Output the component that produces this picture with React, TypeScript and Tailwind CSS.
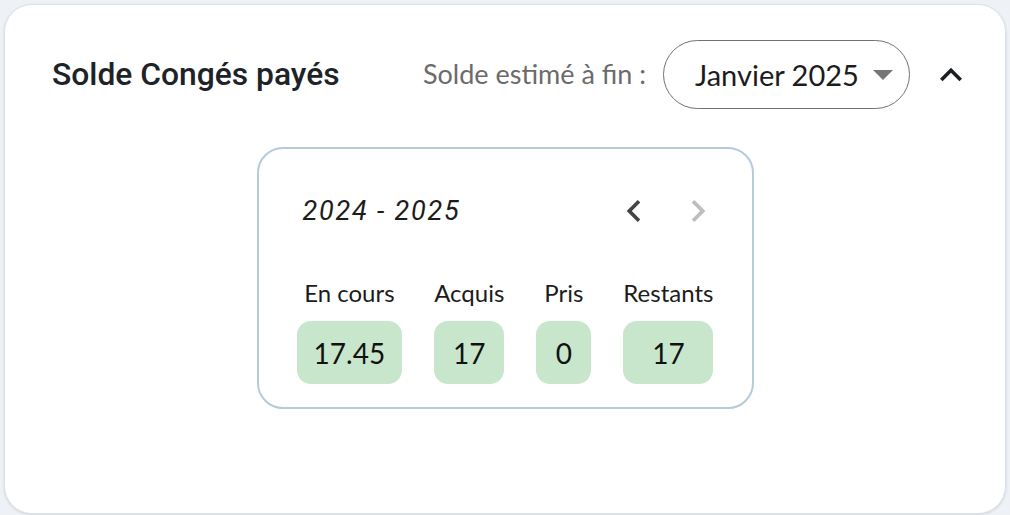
import React from "react";

const BODY = { fontFamily: "Lato, 'Open Sans', sans-serif" };
const TITLE = { fontFamily: "Roboto, 'Noto Sans', sans-serif" };

const stats = [
  { label: "En cours", value: "17.45" },
  { label: "Acquis", value: "17" },
  { label: "Pris", value: "0" },
  { label: "Restants", value: "17" },
];

function Chevron({ dir, className }: { dir: "left" | "right" | "up"; className: string }) {
  const d =
    dir === "left"
      ? "M15.41 7.41 14 6l-6 6 6 6 1.41-1.41L10.83 12z"
      : dir === "right"
        ? "M10 6 8.59 7.41 13.17 12l-4.58 4.59L10 18l6-6z"
        : "M12 8l-6 6 1.41 1.41L12 10.83l4.59 4.58L18 14z";
  return (
    <svg viewBox="0 0 24 24" className={className} fill="currentColor">
      <path d={d} />
    </svg>
  );
}

export default function App() {
  return (
    <div className="h-[515px] w-full bg-[#eef2f7] px-1 pt-1 overflow-hidden" style={BODY}>
      <div className="h-[510px] rounded-[28px] bg-white border border-[#dde2e8] shadow-[0_1px_3px_rgba(0,0,0,0.12)]">
        {/* Header */}
        <div className="flex items-center justify-between pl-[47px] pr-[32px] pt-[35px]">
          <h2 className="text-[31.8px] font-medium text-[#1d2327]" style={TITLE}>
            Solde Congés payés
          </h2>
          <div className="flex items-center">
            <span className="text-[27px] text-[#6b6b6b] mr-[17px]">Solde estimé à fin :</span>
            <button
              type="button"
              className="flex items-center h-[69px] w-[247px] rounded-full border-[1.5px] border-[#6f7376] pl-[31px] pr-[16px]"
            >
              <span className="text-[29px] text-[#1c1c1c]">Janvier 2025</span>
              <svg viewBox="0 0 20 10" className="ml-auto w-[20px] h-[10px]" fill="#767676">
                <path d="M0 0h20L10 10z" />
              </svg>
            </button>
            <button type="button" className="ml-[19px] text-[#1b1f22]">
              <Chevron dir="up" className="w-[44px] h-[44px]" />
            </button>
          </div>
        </div>

        {/* Balance card */}
        <div className="mx-auto mt-[38px] w-[497px] h-[262px] rounded-[26px] border-2 border-[#b5cbd9]">
          <div className="flex items-center h-[40px] mt-[42px] pl-[44px] pr-[32px]">
            <span className="italic text-[27px] text-[#1c1c1c] tracking-[1.8px]" style={TITLE}>
              2024 - 2025
            </span>
            <div className="ml-auto flex items-center gap-[20px]">
              <Chevron dir="left" className="w-[44px] h-[44px] text-[#444444]" />
              <Chevron dir="right" className="w-[44px] h-[44px] text-[#bdbdbd]" />
            </div>
          </div>
          <div className="mt-[50px] flex justify-center gap-8">
            {stats.map((s) => (
              <div key={s.label} className="flex flex-col items-stretch">
                <span className="text-center text-[24px] leading-[24px] text-[#1c1c1c]">{s.label}</span>
                <span className="mt-[16px] h-[63px] min-w-[55px] flex items-center justify-center rounded-[14px] bg-[#c8e6cb] px-[17px] text-[28px] text-[#111111]">
                  {s.value}
                </span>
              </div>
            ))}
          </div>
        </div>
      </div>
    </div>
  );
}
